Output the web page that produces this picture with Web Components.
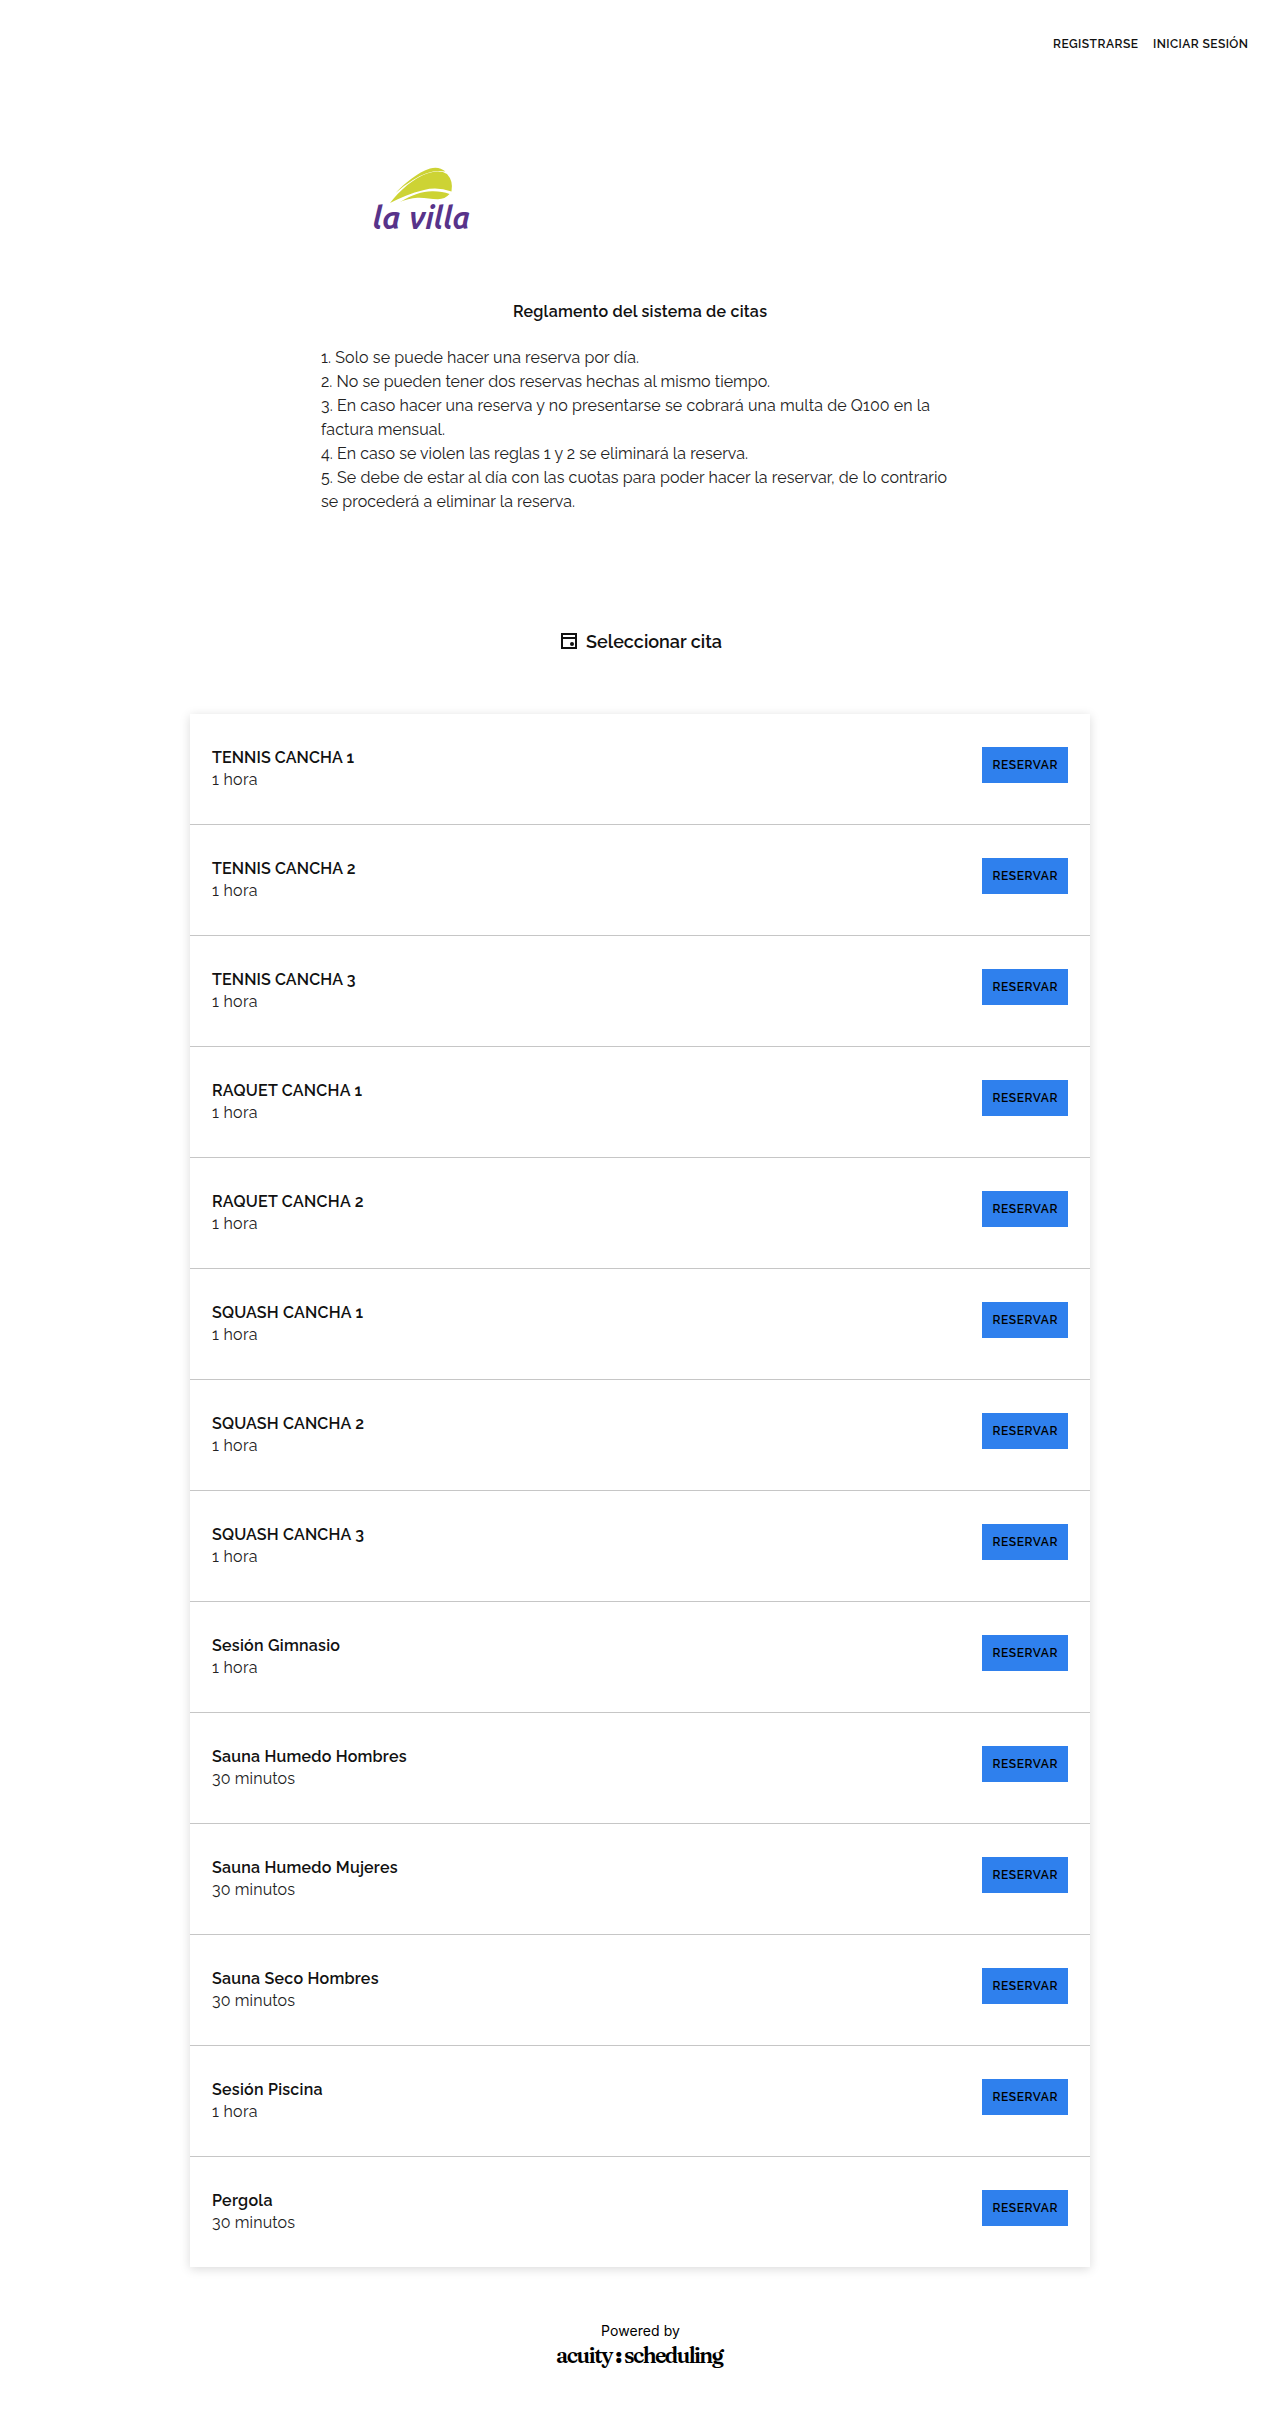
<!DOCTYPE html>
<html lang="es">
<head>
<meta charset="utf-8">
<title>La Villa – Citas</title>
<style>
body { margin: 0; background: #fff; color: #111; font-family: Raleway, Lato, sans-serif; font-size: 16px; }
</style>
</head>
<body>
<booking-page></booking-page>
<script>
/* One line of text, tracked so that it fills the width given in pixels. */
class FitText extends HTMLElement {
  constructor() {
    super();
    this.attachShadow({ mode: 'open' }).innerHTML = `
      <style>:host{display:block;white-space:nowrap}
      span{display:inline-block}</style><span></span>`;
  }
  connectedCallback() {
    const span = this.shadowRoot.querySelector('span');
    span.textContent = this.getAttribute('text');
    const target = parseFloat(this.getAttribute('w'));
    const natural = span.getBoundingClientRect().width;
    const gap = (target - natural) / (span.textContent.length - 1);
    span.style.letterSpacing = gap.toFixed(3) + 'px';
    span.style.marginRight = (-gap).toFixed(3) + 'px';
  }
}
customElements.define('fit-text', FitText);

class AccountNav extends HTMLElement {
  constructor() {
    super();
    this.attachShadow({ mode: 'open' }).innerHTML = `
      <style>:host{display:flex;justify-content:flex-end;gap:15px;padding:34px 32px 0 0;height:20px;line-height:20px;font-size:12px;font-weight:600}</style>
      <fit-text text="REGISTRARSE" w="85"></fit-text>
      <fit-text text="INICIAR SESIÓN" w="95"></fit-text>`;
  }
}
customElements.define('account-nav', AccountNav);

class VillaLogo extends HTMLElement {
  constructor() {
    super();
    this.attachShadow({ mode: 'open' }).innerHTML = `
      <style>:host{display:block;height:100px;padding:96px 0 0 350px}svg{display:block}</style>
      <svg width="140" height="100" viewBox="0 0 140 100">
        <path transform="translate(0 54)" d="" fill="none"/>
        <path fill="#cdd334" d="M45.500 43C54 34 68 22 80 18.500Q89 16 95.500 21.500Q80 19 63 30Q53 36 45.500 43Z"/>
        <path fill="#cdd334" d="M40 53C50 40 64 28 77 23.500Q90 19.500 97 24Q103.500 31 101.500 41.500Q87 36.500 74 40C61 43 50 48 40 53Z"/>
        <path fill="#cdd334" d="M50 52C62 44.500 72 41.500 82 41.200Q92 41 99.500 44Q95 49.200 88 49.200C76 49.200 68 44.500 50 52Z"/>
        <text y="78.500" font-family="Ubuntu, Open Sans, sans-serif" font-size="32" font-weight="700" font-style="italic" fill="#58338a"><tspan x="22.500" textLength="28" lengthAdjust="spacingAndGlyphs">la</tspan> <tspan x="59" textLength="61" lengthAdjust="spacingAndGlyphs">villa</tspan></text>
      </svg>`;
  }
}
customElements.define('villa-logo', VillaLogo);

class RulesText extends HTMLElement {
  constructor() {
    super();
    const lines = [
      ['1. Solo se puede hacer una reserva por día.', 318],
      ['2. No se pueden tener dos reservas hechas al mismo tiempo.', 449],
      ['3. En caso hacer una reserva y no presentarse se cobrará una multa de Q100 en la', 609],
      ['factura mensual.', 124],
      ['4. En caso se violen las reglas 1 y 2 se eliminará la reserva.', 427],
      ['5. Se debe de estar al día con las cuotas para poder hacer la reservar, de lo contrario', 626],
      ['se procederá a eliminar la reserva.', 254]
    ];
    this.attachShadow({ mode: 'open' }).innerHTML = `
      <style>:host{display:flex;flex-direction:column;width:638px;margin:50px auto 0;line-height:24px;color:#222}
      .h{align-self:center;font-weight:600;color:#111;margin-bottom:22px}</style>
      <fit-text class="h" text="Reglamento del sistema de citas" w="254"></fit-text>` +
      lines.map(l => `<fit-text text="${l[0]}" w="${l[1]}"></fit-text>`).join('');
  }
}
customElements.define('rules-text', RulesText);

class StepTitle extends HTMLElement {
  constructor() {
    super();
    this.attachShadow({ mode: 'open' }).innerHTML = `
      <style>:host{display:flex;justify-content:center;align-items:center;gap:9px;height:28px;margin-top:114px;padding-left:3px;line-height:28px;font-size:18px;font-weight:600}svg{display:block;margin-bottom:2px}</style>
      <svg width="16" height="16" viewBox="0 0 16 16"><path d="M1 1h14v14H1zM1 5h14" fill="none" stroke="#111" stroke-width="2"/><circle cx="11" cy="11" r="2" fill="#111"/></svg>
      <fit-text text="Seleccionar cita" w="136"></fit-text>`;
  }
}
customElements.define('step-title', StepTitle);

class ReserveButton extends HTMLElement {
  constructor() {
    super();
    this.attachShadow({ mode: 'open' }).innerHTML = `
      <style>:host{display:flex;justify-content:center;width:86px;height:36px;line-height:36px;background:#2f80ed;color:#000;font-size:12px;font-weight:600}</style>
      <fit-text text="RESERVAR" w="65"></fit-text>`;
  }
}
customElements.define('reserve-button', ReserveButton);

class AppointmentRow extends HTMLElement {
  constructor() {
    super();
    this.attachShadow({ mode: 'open' }).innerHTML = `
      <style>:host{display:flex;justify-content:space-between;align-items:flex-start;padding:33px 22px;line-height:22px}
      :host(:not(:last-child)){border-bottom:1px solid #c6c6c6}
      .t{font-weight:600}.d{color:#222}</style>
      <div><fit-text class="t" text="${this.getAttribute('name')}" w="${this.getAttribute('w')}"></fit-text>
      <fit-text class="d" text="${this.getAttribute('time')}" w="${this.getAttribute('time') === '1 hora' ? 45.5 : 83}"></fit-text></div>
      <reserve-button></reserve-button>`;
  }
}
customElements.define('appointment-row', AppointmentRow);

class AppointmentList extends HTMLElement {
  constructor() {
    super();
    const h = '1 hora', m = '30 minutos';
    const rows = [['TENNIS CANCHA 1', h, 142], ['TENNIS CANCHA 2', h, 143.5], ['TENNIS CANCHA 3', h, 143.5],
      ['RAQUET CANCHA 1', h, 150], ['RAQUET CANCHA 2', h, 151.5], ['SQUASH CANCHA 1', h, 151],
      ['SQUASH CANCHA 2', h, 152], ['SQUASH CANCHA 3', h, 152], ['Sesión Gimnasio', h, 128],
      ['Sauna Humedo Hombres', m, 194.5], ['Sauna Humedo Mujeres', m, 185.5], ['Sauna Seco Hombres', m, 166.5],
      ['Sesión Piscina', h, 110.5], ['Pergola', m, 60.5]];
    this.attachShadow({ mode: 'open' }).innerHTML = `
      <style>:host{display:block;width:900px;margin:58px auto 0;background:#fff;box-shadow:0 2px 10px rgba(0,0,0,.15)}</style>` +
      rows.map(r => `<appointment-row name="${r[0]}" time="${r[1]}" w="${r[2]}"></appointment-row>`).join('');
  }
}
customElements.define('appointment-list', AppointmentList);

class PoweredBy extends HTMLElement {
  constructor() {
    super();
    this.attachShadow({ mode: 'open' }).innerHTML = `
      <style>:host{display:flex;flex-direction:column;align-items:center;padding-top:54px;color:#000}
      .p{font:14px/20px Inter,sans-serif;padding-left:1px}
      .brand{display:flex;align-items:baseline;justify-content:space-between;width:168px;font:600 21.5px/29px Fraunces,"Noto Serif",serif;font-optical-sizing:none;font-variation-settings:"opsz" 36}
      .c{font-weight:900}</style>
      <fit-text class="p" text="Powered by" w="79"></fit-text>
      <div class="brand"><fit-text text="acuity" w="57.5"></fit-text><span class="c">:</span><fit-text text="scheduling" w="100"></fit-text></div>`;
  }
}
customElements.define('powered-by', PoweredBy);

class BookingPage extends HTMLElement {
  constructor() {
    super();
    this.attachShadow({ mode: 'open' }).innerHTML = `
      <style>:host{display:block;height:2428px;overflow:hidden}</style>
      <account-nav></account-nav><villa-logo></villa-logo><rules-text></rules-text>
      <step-title></step-title><appointment-list></appointment-list><powered-by></powered-by>`;
  }
}
customElements.define('booking-page', BookingPage);
</script>
</body>
</html>
